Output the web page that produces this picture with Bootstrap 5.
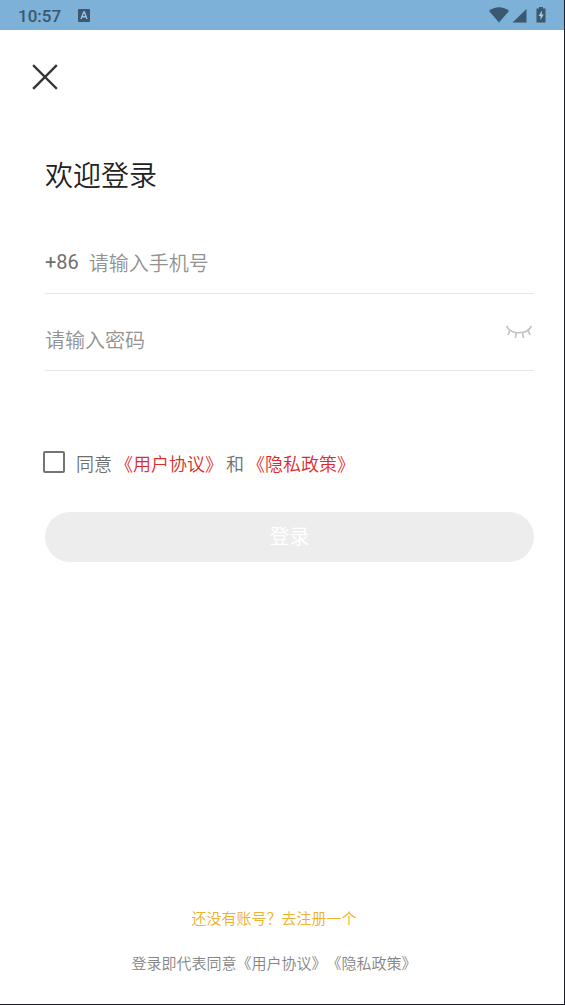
<!DOCTYPE html>
<html lang="zh-CN">
<head>
<meta charset="utf-8">
<meta name="viewport" content="width=device-width, initial-scale=1">
<title>欢迎登录</title>
<link href="https://cdn.jsdelivr.net/npm/bootstrap@5.3.0/dist/css/bootstrap.min.css" rel="stylesheet">
<style>
body { font-family: Roboto, "Noto Sans CJK SC", sans-serif; color: #6f6f6f; background: #fff; text-spacing-trim: space-all; }
.screen { border-right: 1px solid #1d1d2b; border-bottom: 1px solid #1d1d2b; }
.statusbar { height: 30px; background: #7db1d7; color: #3a5870; padding: 1px 18px 0; font-size: 17px; line-height: 28px; font-weight: 500; }
.close-row { padding: 32px 30px 0; }
.close-btn { width: 30px; height: 30px; color: #333; }
.form-area { padding: 65px 30px 0 45px; }
.title { font-size: 28px; line-height: 40px; font-weight: 350; color: #222; margin: 0; }
.field { height: 77px; padding-top: 14px; border-bottom: 1px solid #e8e8e8; font-size: 20px; }
.fields { margin-top: 20px; }
.field input { font-weight: 350; font-size: 20px; line-height: 30px; padding: 4px 0 0; background: none; min-width: 0; color: #444; }
.field input::placeholder { color: #929292; opacity: 1; }
.field .prefix { margin-right: 10px; }
.agree { margin: 73px 0 0; font-size: 18px; line-height: 28px; gap: 3px; font-weight: 350; }
.agree label, .agree a, .agree span { padding-top: 7px; }
.agree a { color: #e02b2b; }
.tick { appearance: none; width: 22px; height: 22px; margin: 0 8px 0 -2px; border: 2px solid #747474; border-radius: 2px; background: #fff; }
.tick:checked { background: #747474; }
.login-btn { height: 50px; margin-top: 33px; background: #ededed; color: #fff; font-size: 20px; }
.login-btn:hover { background: #e4e4e4; color: #fff; }
.foot { padding: 0 16px 28px 0; font-size: 15px; line-height: 24px; gap: 21px; color: #858585; font-weight: 350; }
.foot .register { color: #f0b030; }
</style>
</head>
<body>
<div class="screen d-flex flex-column min-vh-100">
  <header class="statusbar d-flex align-items-center justify-content-between">
    <div class="d-flex align-items-center gap-3">
      <span>10:57</span>
      <svg width="13" height="14" viewBox="0 0 13 14" aria-hidden="true"><rect x="1" y="0" width="12" height="13" rx="1" fill="#3a5870"/><path d="M4 10 6.800 3h.6L10 10M5 7.800h4" fill="none" stroke="#9cc4e0" stroke-width="1.400"/></svg>
    </div>
    <svg width="57" height="18" viewBox="0 0 57 18" fill="#3a5870" aria-hidden="true">
      <path d="M0 4C5.500 -1 14.500 -1 20 4L10 15.500Z"/>
      <path d="M37.500 2v13.500H23.500Z"/>
      <path d="M50 0h4v1.500h2.500v14h-9V1.500H50Z"/>
      <path d="M53 3.500 49.500 9h2v4l3.300-5.500h-2Z" fill="#a5cbe5"/>
    </svg>
  </header>
  <div class="close-row">
    <button type="button" class="close-btn btn p-0 border-0 d-block" aria-label="关闭">
      <svg class="d-block" width="30" height="30" viewBox="0 0 30 30"><path d="M4 4 26 26M26 4 4 26" fill="none" stroke="currentColor" stroke-width="2.400" stroke-linecap="square"/></svg>
    </button>
  </div>
  <main class="flex-grow-1">
    <form class="form-area">
      <h1 class="title">欢迎登录</h1>
      <div class="fields">
        <div class="field d-flex align-items-center">
          <label class="prefix" for="phone">+86</label>
          <input id="phone" type="tel" class="flex-grow-1 border-0" placeholder="请输入手机号">
        </div>
        <div class="field d-flex align-items-center">
          <input id="password" type="password" class="flex-grow-1 border-0" placeholder="请输入密码" aria-label="密码">
          <button type="button" class="btn p-0 border-0" aria-label="显示密码">
            <svg class="d-block" width="30" height="30" viewBox="0 0 30 30" fill="none" stroke="#c4c4c4" stroke-width="1.700"><path d="M2.500 2C7 11 23 11 27.500 2M6 6 4 11M12 8.800 11.500 14M18.500 8.800 19.500 14M24 6 26 11"/></svg>
          </button>
        </div>
      </div>
      <div class="agree d-flex align-items-center">
        <input type="checkbox" id="agree" class="tick flex-shrink-0">
        <label for="agree">同意</label>
        <a href="#terms" class="text-decoration-none">《用户协议》</a>
        <span>和</span>
        <a href="#privacy" class="text-decoration-none">《隐私政策》</a>
      </div>
      <button type="submit" class="login-btn btn border-0 rounded-pill w-100 p-0">登录</button>
    </form>
  </main>
  <footer class="foot d-flex flex-column align-items-center">
    <a href="#register" class="register text-decoration-none">还没有账号？去注册一个</a>
    <span>登录即代表同意《用户协议》《隐私政策》</span>
  </footer>
</div>
<script src="https://cdn.jsdelivr.net/npm/bootstrap@5.3.0/dist/js/bootstrap.bundle.min.js"></script>
</body>
</html>
